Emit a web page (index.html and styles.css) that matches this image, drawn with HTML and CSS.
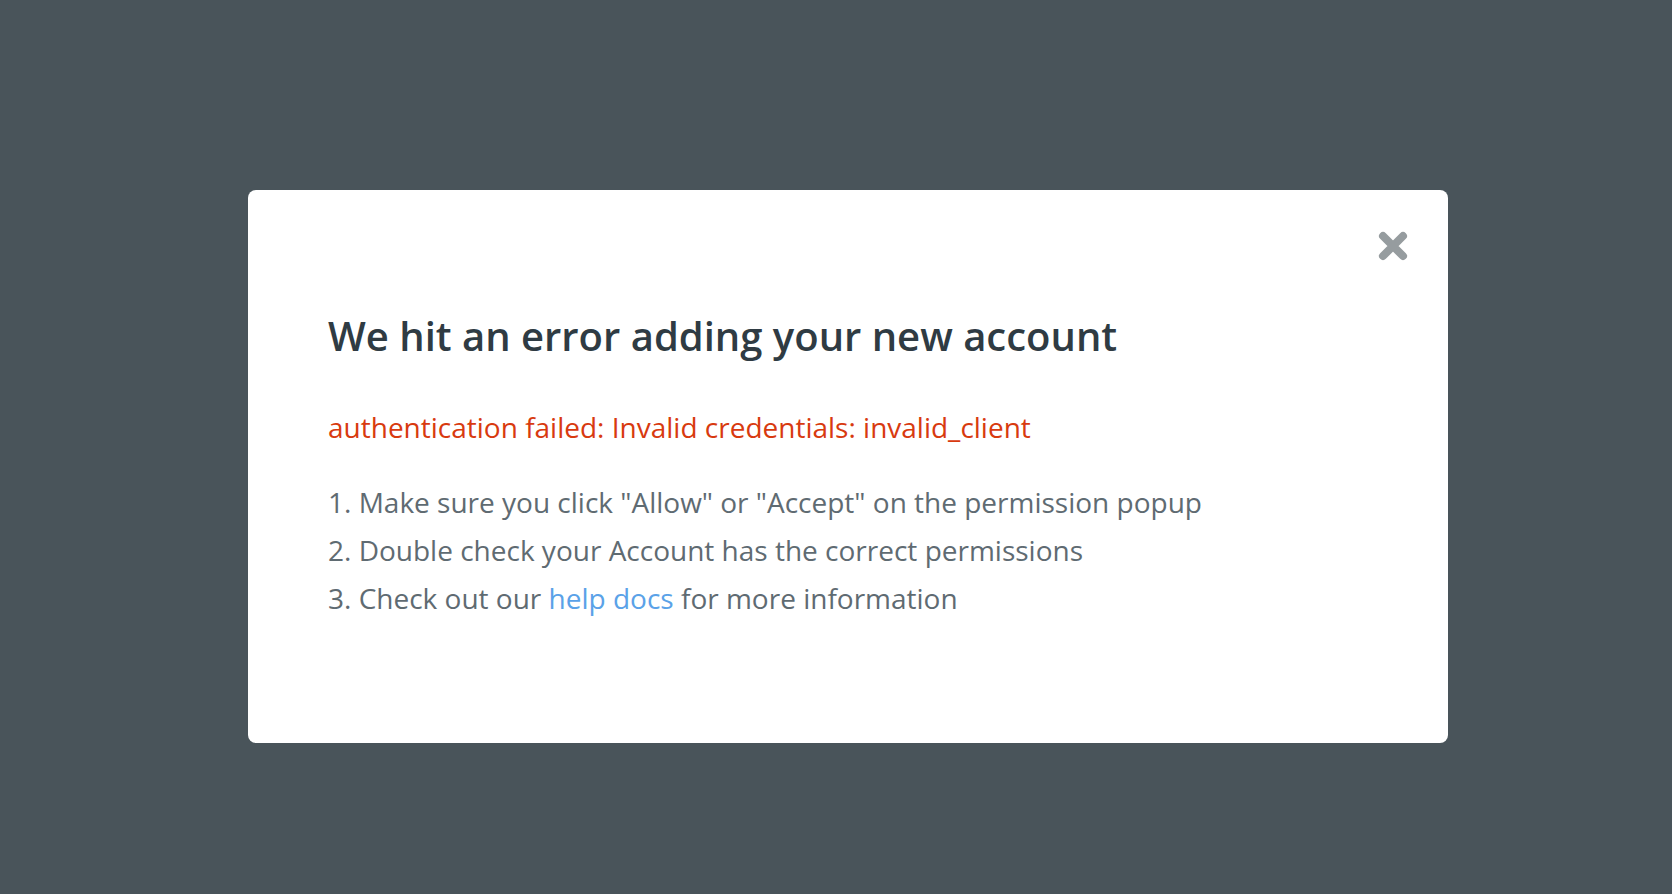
FILE: index.html
```html
<!DOCTYPE html>
<html lang="en">
<head>
<meta charset="utf-8">
<title>Error</title>
<link rel="stylesheet" href="styles.css">
</head>
<body>
<div class="modal">
  <button class="close" aria-label="Close">
    <svg width="32" height="32" viewBox="0 0 32 32"><path d="M6 6 L26 26 M26 6 L6 26" stroke="#969c9f" stroke-width="8" stroke-linecap="round" fill="none"/></svg>
  </button>
  <h1 class="title">We hit an error adding your new account</h1>
  <p class="error">authentication failed: Invalid credentials: invalid_client</p>
  <ol class="steps">
    <li>1. Make sure you click "Allow" or "Accept" on the permission popup</li>
    <li>2. Double check your Account has the correct permissions</li>
    <li>3. Check out our <a href="#" class="link">help docs</a> for more information</li>
  </ol>
</div>
</body>
</html>
```
FILE: styles.css
```css
html, body {
  margin: 0;
  height: 100%;
}
body {
  background: #49545a;
  font-family: "Open Sans", "Noto Sans", sans-serif;
  padding: 190px 0 0 248px;
  box-sizing: border-box;
}
.modal {
  position: relative;
  width: 1200px;
  height: 553px;
  box-sizing: border-box;
  background: #fff;
  border-radius: 8px;
  padding: 119px 80px 0 80px;
}
.close {
  position: absolute;
  left: 1129px;
  top: 40px;
  padding: 0;
  border: 0;
  background: none;
  width: 32px;
  height: 32px;
  cursor: pointer;
}
.close svg { display: block; }
.title {
  margin: 0;
  font-size: 40px;
  line-height: 54px;
  font-weight: 600;
  color: #2f3b43;
}
.error {
  margin: 45px 0 0;
  font-size: 28px;
  line-height: 38px;
  color: #d83a0f;
}
.steps {
  list-style: none;
  margin: 32px 0 0;
  padding: 0;
  font-size: 28px;
  line-height: 48px;
  color: #5f6b72;
}
.link {
  color: #5aa2e8;
  text-decoration: none;
}
```
